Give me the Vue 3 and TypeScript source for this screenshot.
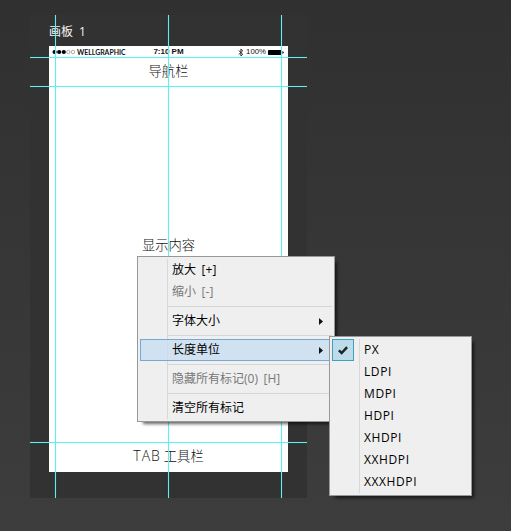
<script setup lang="ts">
import { ref } from 'vue'

interface MenuItem {
  label: string
  disabled?: boolean
  children?: boolean
}

const groups: MenuItem[][] = [
  [{ label: '放大 [+]' }, { label: '缩小 [-]', disabled: true }],
  [{ label: '字体大小', children: true }],
  [{ label: '长度单位', children: true }],
  [{ label: '隐藏所有标记(0) [H]', disabled: true }],
  [{ label: '清空所有标记' }]
]

const units = ['PX', 'LDPI', 'MDPI', 'HDPI', 'XHDPI', 'XXHDPI', 'XXXHDPI']

const active = ref('长度单位')
const unit = ref('PX')
</script>

<template>
  <div class="workspace">
    <div class="canvas">
      <div class="board-name">画板 1</div>
      <div class="artboard">
        <div class="status-bar">
          <div class="carrier">
            <svg class="signal" width="24" height="6" viewBox="0 0 24 6">
              <circle cx="2.6" cy="3" r="2.1" />
              <circle cx="7.2" cy="3" r="2.1" />
              <circle cx="11.8" cy="3" r="2.1" />
              <circle class="hollow" cx="16.3" cy="3" r="1.7" />
              <circle class="hollow" cx="20.9" cy="3" r="1.7" />
            </svg>
            <span class="carrier-name">WELLGRAPHIC</span>
          </div>
          <span class="time">7:10 PM</span>
          <div class="power">
            <svg width="6" height="9" viewBox="0 0 6 9">
              <path class="bluetooth" d="M.7 2.5 4.8 6.3 2.9 8V1l1.9 1.7L.7 6.5" />
            </svg>
            <span class="percent">100%</span>
            <svg width="17" height="7" viewBox="0 0 17 7">
              <rect x="0" y="1" width="14" height="5" rx="0.7" />
              <path d="M14.4 2 16.1 3.5 14.4 5z" />
            </svg>
          </div>
        </div>
        <div class="nav-bar">导航栏</div>
        <div class="content">显示内容</div>
        <div class="tab-bar"><span class="latin">TAB</span> 工具栏</div>
      </div>
      <i class="guide vertical margin-left"></i>
      <i class="guide vertical middle"></i>
      <i class="guide vertical margin-right"></i>
      <i class="guide horizontal below-status"></i>
      <i class="guide horizontal below-nav"></i>
      <i class="guide horizontal above-tab"></i>
    </div>

    <div class="menu main-menu">
      <div v-for="(group, i) in groups" :key="i" class="group">
        <div
          v-for="item in group"
          :key="item.label"
          class="item"
          :class="{ disabled: item.disabled, active: item.label === active }"
          @mouseenter="item.children && (active = item.label)"
        >
          <span>{{ item.label }}</span>
          <svg v-if="item.children" class="arrow" width="4" height="7" viewBox="0 0 4 7">
            <path d="M0 0 4 3.5 0 7z" />
          </svg>
        </div>
      </div>
    </div>

    <div class="menu sub-menu">
      <div v-for="u in units" :key="u" class="item" @click="unit = u">
        <span class="check" :class="{ checked: u === unit }">
          <svg v-if="u === unit" width="10" height="9" viewBox="0 0 10 9">
            <path d="M.9 4.3 3.7 7 9.1 1.2" />
          </svg>
        </span>
        <span>{{ u }}</span>
      </div>
    </div>
  </div>
</template>

<style>
body {
  margin: 0;
  overflow: hidden;
}
</style>

<style scoped>
.workspace {
  position: relative;
  box-sizing: border-box;
  width: 511px;
  height: 531px;
  padding: 15px 0 0 30px;
  background: linear-gradient(#303030, #3d3d3d);
  overflow: hidden;
}

.canvas {
  position: relative;
  box-sizing: border-box;
  width: 277px;
  height: 483px;
  padding-left: 19px;
  background: #323232;
}

.board-name {
  height: 31px;
  line-height: 33px;
  font-family: 'Open Sans', 'Noto Sans CJK SC', sans-serif;
  font-size: 12px;
  word-spacing: 3px;
  color: #f4f4f4;
}

.artboard {
  display: flex;
  flex-direction: column;
  width: 239px;
  height: 426px;
  background: #fff;
  font-family: 'Noto Sans CJK SC', sans-serif;
  font-size: 13.3px;
  font-weight: 300;
  color: #111;
  text-align: center;
}

.status-bar {
  display: grid;
  grid-template-columns: 1fr auto 1fr;
  align-items: center;
  height: 12px;
  padding: 0 3px;
  font-family: 'Liberation Sans', sans-serif;
  font-size: 8px;
  font-weight: 400;
  line-height: 12px;
  color: #111;
}

.status-bar svg {
  display: block;
}

.carrier {
  display: flex;
  align-items: center;
}

.signal .hollow {
  fill: none;
  stroke: #888;
  stroke-width: 0.7;
}

.carrier-name {
  padding-left: 1px;
  font-family: Lato, sans-serif;
  font-size: 6.9px;
  font-weight: 700;
}

.time {
  font-weight: 700;
}

.power {
  display: flex;
  align-items: center;
  justify-content: flex-end;
  gap: 2px;
}

.percent {
  font-size: 7.8px;
}

.bluetooth {
  fill: none;
  stroke: #222;
  stroke-width: 0.9;
}

.nav-bar {
  height: 28px;
  line-height: 25px;
}

.content {
  flex: 1;
  padding-top: 149px;
  line-height: 20px;
}

.tab-bar {
  height: 30px;
  line-height: 28px;
}

.latin {
  font-family: 'Open Sans', sans-serif;
  font-size: 14px;
  letter-spacing: 1px;
}

.guide {
  position: absolute;
  background: #5eefee;
  box-shadow: 0 0 1px rgba(94, 239, 238, 0.4);
}

.vertical {
  top: 0;
  bottom: 0;
  width: 1px;
}

.horizontal {
  left: 0;
  right: 0;
  height: 1px;
}

.margin-left {
  left: 25px;
}

.middle {
  left: 138px;
}

.margin-right {
  left: 251px;
}

.below-status {
  top: 42px;
}

.below-nav {
  top: 71px;
}

.above-tab {
  top: 427px;
}

.menu {
  position: absolute;
  box-sizing: border-box;
  padding: 2px;
  border: 1px solid #989898;
  background: #efefef;
  box-shadow: 4px 4px 3px -2px rgba(0, 0, 0, 0.6);
  font-family: 'Open Sans', 'Noto Sans CJK SC', sans-serif;
  font-size: 12px;
  color: #000;
  cursor: default;
}

/* gutter line between the icon column and the labels */
.menu::before {
  content: '';
  position: absolute;
  top: 2px;
  bottom: 2px;
  left: 29px;
  width: 1px;
  background: #d6d9db;
}

.main-menu {
  top: 256px;
  left: 137px;
  width: 198px;
  word-spacing: 2.5px;
}

.sub-menu {
  top: 336px;
  left: 329px;
  width: 143px;
  letter-spacing: 0.6px;
}

.group + .group::before {
  content: '';
  display: block;
  height: 1px;
  margin: 3px 0 3px 28px;
  background: #d6d6d6;
}

.item {
  position: relative;
  display: flex;
  align-items: center;
  box-sizing: border-box;
  height: 22px;
  line-height: 16px;
  white-space: nowrap;
}

.main-menu .item {
  justify-content: space-between;
  padding: 0 8px 0 31px;
  border: 1px solid transparent;
}

.main-menu .item.active {
  border-color: #78a8d0;
  background: rgba(198, 221, 242, 0.75);
}

.item.disabled {
  color: #777;
}

.arrow {
  fill: #111;
}

.check {
  display: flex;
  align-items: center;
  justify-content: center;
  box-sizing: border-box;
  width: 22px;
  height: 22px;
  margin-right: 10px;
}

.checked {
  border: 1px solid #3f9fc0;
  background: #bddcea;
}

.check path {
  fill: none;
  stroke: #1d2327;
  stroke-width: 2.5;
}
</style>
